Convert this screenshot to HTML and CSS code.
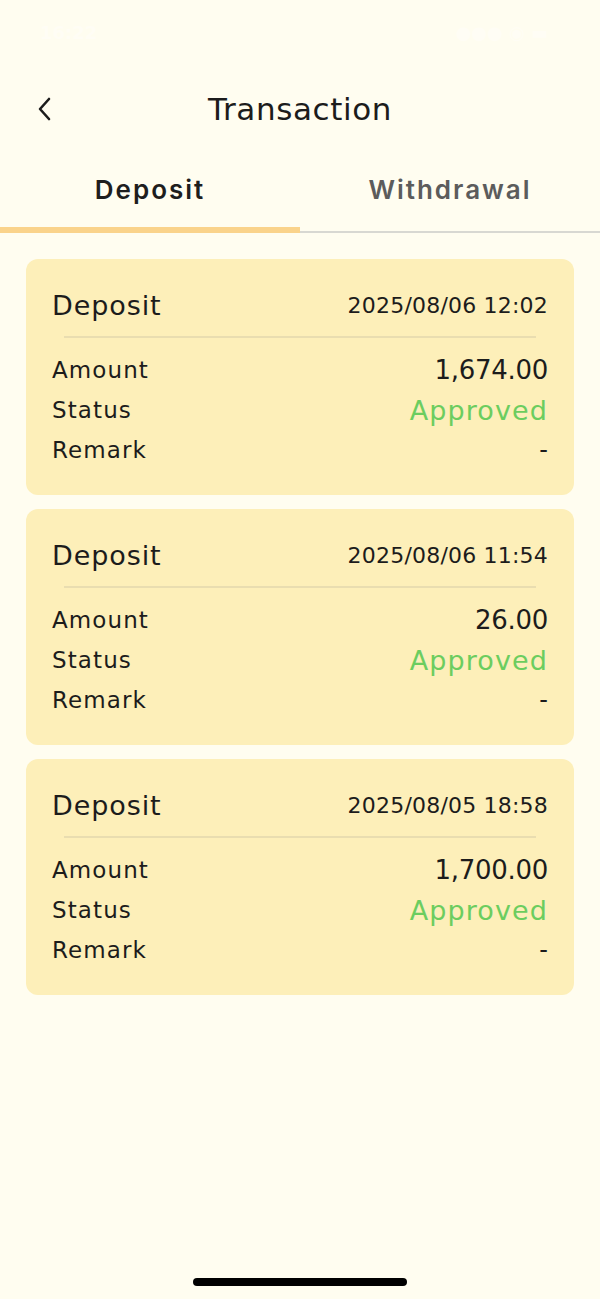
FILE: index.html
```html
<!DOCTYPE html>
<html>
<head>
<meta charset="utf-8">
<link rel="stylesheet" href="styles.css">
</head>
<body>
<div class="screen">
  <div class="statusbar">
    <span class="time">16:22</span>
    <span class="icons">●●● ◉ ▬</span>
  </div>
  <header class="topbar">
    <button class="back" aria-label="Back">
      <svg width="18" height="26" viewBox="0 0 18 26"><path d="M14 3 L5 13 L14 23" fill="none" stroke="#1c1c1c" stroke-width="2.6" stroke-linecap="round" stroke-linejoin="round"/></svg>
    </button>
    <h1 class="title">Transaction</h1>
  </header>
  <nav class="tabs">
    <div class="tab active">Deposit</div>
    <div class="tab">Withdrawal</div>
  </nav>
  <main class="list">
    <section class="card">
      <div class="card-head"><span class="type">Deposit</span><span class="date">2025/08/06 12:02</span></div>
      <div class="divider"></div>
      <div class="row"><span class="label">Amount</span><span class="amount">1,674.00</span></div>
      <div class="row"><span class="label">Status</span><span class="status">Approved</span></div>
      <div class="row"><span class="label">Remark</span><span class="remark">-</span></div>
    </section>
    <section class="card">
      <div class="card-head"><span class="type">Deposit</span><span class="date">2025/08/06 11:54</span></div>
      <div class="divider"></div>
      <div class="row"><span class="label">Amount</span><span class="amount">26.00</span></div>
      <div class="row"><span class="label">Status</span><span class="status">Approved</span></div>
      <div class="row"><span class="label">Remark</span><span class="remark">-</span></div>
    </section>
    <section class="card">
      <div class="card-head"><span class="type">Deposit</span><span class="date">2025/08/05 18:58</span></div>
      <div class="divider"></div>
      <div class="row"><span class="label">Amount</span><span class="amount">1,700.00</span></div>
      <div class="row"><span class="label">Status</span><span class="status">Approved</span></div>
      <div class="row"><span class="label">Remark</span><span class="remark">-</span></div>
    </section>
  </main>
  <div class="home-indicator"></div>
</div>
</body>
</html>
```
FILE: styles.css
```css
* { box-sizing: border-box; }
html, body { margin: 0; padding: 0; }
body {
  background: #fffdf0;
  font-family: "DejaVu Sans", "Noto Sans", sans-serif;
  color: #1c1c1c;
}
.screen {
  width: 600px;
  height: 1299px;
  display: flex;
  flex-direction: column;
  position: relative;
}
.statusbar {
  height: 64px;
  display: flex;
  justify-content: space-between;
  align-items: center;
  padding: 0 52px 0 40px;
  color: #fffdf5;
  font-size: 18px;
  font-weight: 600;
}
.topbar {
  height: 90px;
  display: flex;
  align-items: center;
  justify-content: center;
  position: relative;
}
.back {
  position: absolute;
  left: 35px;
  top: 50%;
  transform: translateY(-50%);
  background: none;
  border: 0;
  padding: 0;
  display: flex;
}
.title {
  margin: 0;
  font-size: 31px;
  font-weight: 400;
  letter-spacing: 0.6px;
  line-height: 1;
}
.tabs {
  display: flex;
  height: 79px;
  border-bottom: 2px solid #d8d8d2;
}
.tab {
  flex: 1;
  display: flex;
  align-items: center;
  justify-content: center;
  font-family: "Inter", "DejaVu Sans", sans-serif;
  font-size: 26px;
  font-weight: 600;
  letter-spacing: 2px;
  color: #5c5c5c;
  padding-bottom: 2px;
  margin-bottom: -2px;
  border-bottom: 6px solid transparent;
}
.tab.active {
  color: #1e1e1e;
  border-bottom-color: #fad38b;
}
.list {
  display: flex;
  flex-direction: column;
  gap: 14px;
  padding: 26px 26px 0 26px;
}
.card {
  background: #fdefb9;
  border-radius: 12px;
  height: 236px;
  padding: 26px 26px 0 26px;
}
.card-head {
  display: flex;
  justify-content: space-between;
  align-items: center;
  height: 40px;
}
.type {
  font-size: 27px;
  letter-spacing: 0.9px;
}
.date {
  font-size: 22px;
  letter-spacing: 0.2px;
}
.divider {
  height: 2px;
  background: #e9ddb0;
  margin: 11px 12px 12px 12px;
}
.row {
  display: flex;
  justify-content: space-between;
  align-items: center;
  height: 40px;
}
.label {
  font-size: 23px;
  letter-spacing: 1.1px;
}
.amount {
  font-size: 26px;
  letter-spacing: -0.3px;
}
.status {
  font-size: 27px;
  letter-spacing: 1.1px;
  color: #6ccd5f;
}
.remark {
  font-size: 24px;
}
.home-indicator {
  position: absolute;
  left: 193px;
  top: 1278px;
  width: 214px;
  height: 8px;
  border-radius: 4px;
  background: #000;
}
```
